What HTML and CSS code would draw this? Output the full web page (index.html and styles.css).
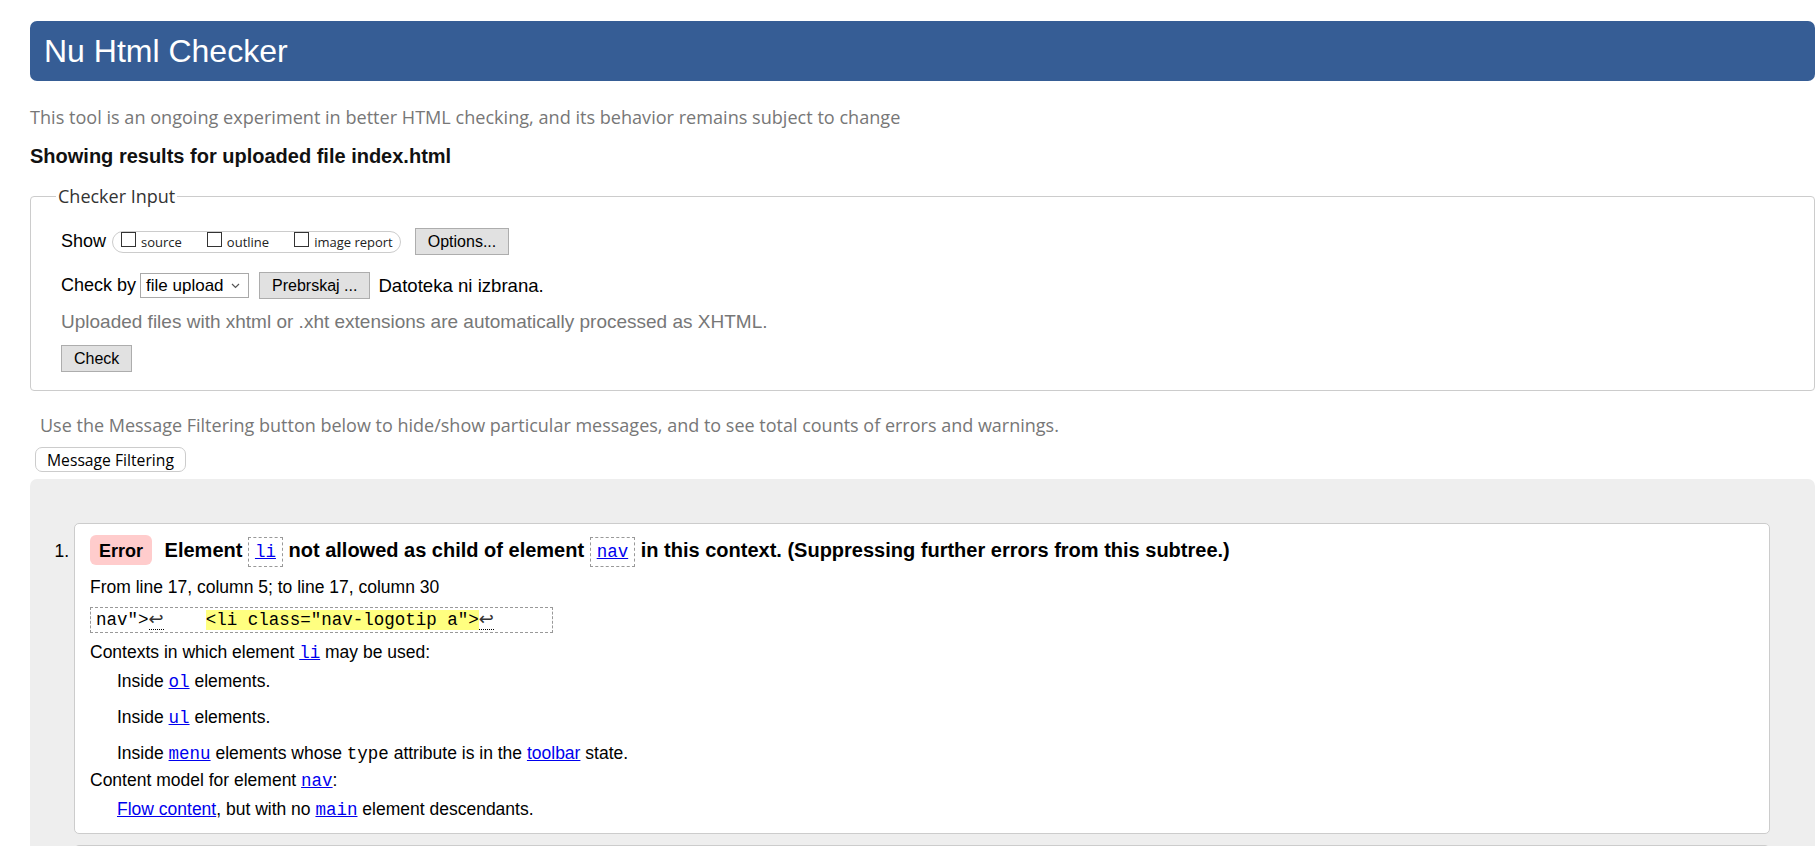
FILE: index.html
```html
<!DOCTYPE html>
<html lang="en">
<head>
<meta charset="utf-8">
<title>Nu Html Checker</title>
<link rel="stylesheet" href="styles.css">
</head>
<body>
<h1 class="banner">Nu Html Checker</h1>
<p class="intro">This tool is an ongoing experiment in better HTML checking, and its behavior remains subject to change</p>
<p class="results-for">Showing results for uploaded file index.html</p>
<form class="input-form">
  <fieldset class="checker-input">
    <legend class="legend">Checker Input</legend>
    <div class="form-row">
      <span class="label">Show</span>
      <span class="show-group">
        <span class="opt"><span class="cbox"></span><span class="opt-label">source</span></span>
        <span class="opt"><span class="cbox"></span><span class="opt-label">outline</span></span>
        <span class="opt"><span class="cbox"></span><span class="opt-label">image report</span></span>
      </span>
      <span class="btn btn-options">Options...</span>
    </div>
    <div class="form-row row-checkby">
      <span class="label label-checkby">Check by</span>
      <span class="select">file upload<svg class="chev" width="9" height="6" viewBox="0 0 9 6"><path d="M1 1 L4.5 4.5 L8 1" fill="none" stroke="#555" stroke-width="1.2"/></svg></span>
      <span class="btn btn-browse">Prebrskaj ...</span>
      <span class="file-status">Datoteka ni izbrana.</span>
    </div>
    <p class="note">Uploaded files with xhtml or .xht extensions are automatically processed as XHTML.</p>
    <div class="check-row"><span class="btn">Check</span></div>
  </fieldset>
</form>
<p class="filter-note">Use the Message Filtering button below to hide/show particular messages, and to see total counts of errors and warnings.</p>
<button class="filter-btn" type="button">Message Filtering</button>
<div class="results">
  <ol class="messages">
    <li class="msg">
      <p class="msg-title"><strong class="badge">Error</strong> Element <code class="ref"><a href="#">li</a></code> not allowed as child of element <code class="ref"><a href="#">nav</a></code> in this context. (Suppressing further errors from this subtree.)</p>
      <p class="location">From line 17, column 5; to line 17, column 30</p>
      <p class="extract"><code class="extract-code">nav"&gt;<abbr class="lf" title="Line break">↩</abbr>    <b class="hl">&lt;li class="nav-logotip a"&gt;</b><abbr class="lf" title="Line break">↩</abbr></code></p>
      <dl class="details">
        <dt>Contexts in which element <a class="mono" href="#">li</a> may be used:</dt>
        <dd>
          <p>Inside <a class="mono" href="#">ol</a> elements.</p>
          <p>Inside <a class="mono" href="#">ul</a> elements.</p>
          <p>Inside <a class="mono" href="#">menu</a> elements whose <code class="mono-plain">type</code> attribute is in the <a href="#">toolbar</a> state.</p>
        </dd>
        <dt class="dt-next">Content model for element <a class="mono" href="#">nav</a>:</dt>
        <dd>
          <p><a href="#">Flow content</a>, but with no <a class="mono" href="#">main</a> element descendants.</p>
        </dd>
      </dl>
    </li>
    <li class="msg msg-peek"></li>
  </ol>
</div>
</body>
</html>
```
FILE: styles.css
```css
html {
  background: #fff;
}

body {
  margin: 0;
  padding: 21px 1px 0 30px;
  font-family: "Liberation Sans", Arial, sans-serif;
  font-size: 18px;
  color: #000;
  height: 825px;
  overflow: hidden;
}

.banner {
  margin: 0;
  height: 60px;
  line-height: 60px;
  padding-left: 14px;
  background: #365d95;
  color: #fff;
  font-size: 32px;
  font-weight: normal;
  border-radius: 7px;
}

.intro {
  margin: 24px 0 0;
  font-family: "Open Sans", sans-serif;
  font-size: 18.1px;
  line-height: 24px;
  color: #777;
}

.results-for {
  margin: 15px 0 0;
  font-weight: bold;
  font-size: 20px;
  line-height: 24px;
  color: #111;
}

.input-form {
  margin: 16px 0 0;
}

.checker-input {
  margin: 0;
  padding: 0 30px 18px;
  border: 1px solid #ccc;
  border-radius: 4px;
}

.legend {
  margin-left: -5px;
  padding: 0 2px;
  font-family: "Open Sans", sans-serif;
  font-size: 18px;
  line-height: 24px;
  color: #333;
}

.form-row {
  display: flex;
  align-items: center;
  height: 27px;
  margin-top: 20px;
}

.row-checkby {
  margin-top: 17px;
}

.label {
  margin-right: 6px;
}

.label-checkby {
  margin-right: 4px;
}

.show-group {
  display: flex;
  align-items: center;
  box-sizing: border-box;
  height: 22px;
  padding: 0 7px 0 8px;
  border: 1px solid #ccc;
  border-radius: 11px;
  margin-right: 14px;
}

.opt {
  display: flex;
  align-items: baseline;
}

.opt + .opt {
  margin-left: 25px;
}

.cbox {
  display: inline-block;
  width: 13px;
  height: 13px;
  border: 1px solid #333;
  background: #fff;
  margin-right: 5px;
}

.opt-label {
  font-family: "Open Sans", sans-serif;
  font-size: 13px;
  line-height: 20px;
  color: #222;
}

.btn {
  display: inline-flex;
  align-items: center;
  box-sizing: border-box;
  height: 27px;
  padding: 0 12px;
  border: 1px solid #adadad;
  background: #e1e1e1;
  font-size: 16px;
  color: #000;
}

.select {
  display: inline-flex;
  align-items: center;
  box-sizing: border-box;
  width: 109px;
  height: 25px;
  padding-left: 5px;
  border: 1px solid #a9a9a9;
  background: #fff;
  font-size: 17px;
}

.chev {
  margin-left: auto;
  margin-right: 8px;
}

.btn-browse {
  margin-left: 10px;
}

.file-status {
  margin-left: 8px;
  font-size: 18.6px;
}

.note {
  margin: 11px 0 0;
  font-size: 19px;
  line-height: 24px;
  color: #777;
}

.check-row {
  display: flex;
  margin-top: 11px;
}

.filter-note {
  margin: 22px 0 0 10px;
  font-family: "Open Sans", sans-serif;
  font-size: 18px;
  line-height: 24px;
  color: #777;
}

.filter-btn {
  display: block;
  margin: 10px 0 0 5px;
  height: 25px;
  padding: 0 11px;
  border: 1px solid #ccc;
  border-radius: 7px;
  background: #fff;
  font-family: "Open Sans", sans-serif;
  font-size: 15.7px;
  color: #000;
}

.results {
  margin-top: 7px;
  min-height: 400px;
  padding: 44px 45px 0 44px;
  background: #eee;
  border-radius: 7px 7px 0 0;
}

.messages {
  margin: 0;
  padding: 0;
  list-style: decimal outside;
}

.msg {
  background: #fff;
  border: 1px solid #ccc;
  border-radius: 5px;
  padding: 11px 15px 11px;
  margin-bottom: 11px;
  font-size: 17.5px;
}

.msg-peek {
  list-style: none;
  height: 60px;
  padding: 0;
}

.msg-title {
  margin: 0;
  font-weight: bold;
  font-size: 20px;
  line-height: 30px;
}

.badge {
  display: inline-block;
  padding: 6px 9px 4px;
  line-height: 20px;
  font-size: 18px;
  background: #fcc;
  border-radius: 6px;
  margin-right: 7px;
}

.ref {
  display: inline-block;
  padding: 4px 6px;
  line-height: 20px;
  border: 1px dashed #999;
  font-family: "Liberation Mono", "Courier New", monospace;
  font-size: 17.5px;
  font-weight: normal;
}

a {
  color: #00e;
}

.location {
  margin: 7px 0 0;
  line-height: 26px;
}

.extract {
  margin: 7px 0 0;
}

.extract-code {
  display: inline-block;
  padding: 0 58px 0 5px;
  border: 1px dashed #999;
  line-height: 24px;
  font-family: "Liberation Mono", "Courier New", monospace;
  font-size: 17.5px;
  white-space: pre;
}

.hl {
  font-weight: normal;
  background: #ffff80;
}

.lf {
  font-family: "DejaVu Sans", sans-serif;
  font-size: 18px;
  line-height: 1;
  color: #333;
  text-decoration: none;
  border-bottom: 1px dotted #000;
}

.details {
  margin: 6px 0 0;
  line-height: 26px;
}

.details dt {
  margin: 0;
}

.details dt.dt-next {
  margin-top: 1px;
}

.details dd {
  margin: 3px 0 0 27px;
}

.details dd p {
  margin: 0;
}

.details dd p + p {
  margin-top: 10px;
}

.mono,
.mono-plain {
  font-family: "Liberation Mono", "Courier New", monospace;
  font-size: 17.5px;
  line-height: 1;
}
```
